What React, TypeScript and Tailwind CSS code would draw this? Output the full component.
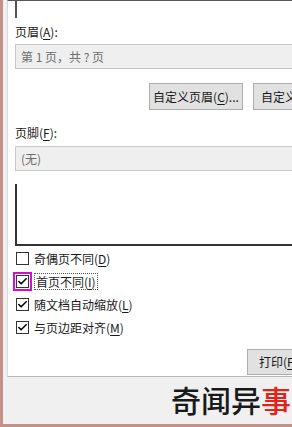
import { Check } from "lucide-react";

const font = { fontFamily: '"Noto Sans CJK SC", "Microsoft YaHei", sans-serif' };

function U({ c }: { c: string }) {
  return <span className="underline underline-offset-2">{c}</span>;
}

function Box({ checked }: { checked: boolean }) {
  return (
    <span className="flex h-[13px] w-[13px] items-center justify-center border border-[#333] bg-white">
      {checked && <Check className="h-[11px] w-[11px] text-black" strokeWidth={3.5} />}
    </span>
  );
}

const checks = [
  { label: "奇偶页不同", key: "D", checked: false },
  { label: "首页不同", key: "I", checked: true, focus: true },
  { label: "随文档自动缩放", key: "L", checked: true },
  { label: "与页边距对齐", key: "M", checked: true },
];

export default function App() {
  return (
    <div
      className="relative h-[427px] w-[292px] overflow-hidden border-b-[3px] border-l-[3px] border-[#c4908a] bg-[#f0f0f0] text-[12px] text-[#1a1a1a]"
      style={font}
    >
      <div className="ml-[4px] h-[377px] overflow-hidden border-l border-t border-b border-l-[#d8d8d8] border-t-[#555] border-b-[#b8b8b8] bg-white pl-[7px]">
        <div className="h-[17px] w-[2px] bg-[#555]" />

        <div className="mt-[6px] leading-[16px]">
          页眉(<U c="A" />):
        </div>
        <div className="mt-[4px] flex h-[25px] w-[290px] items-center border border-[#c8c8c8] bg-[#efefef] pl-[5px] text-[#6d6d6d]">
          第 1 页，共 ? 页
        </div>

        <div className="mt-[14px] flex gap-[10px] pl-[134px]">
          <div className="flex h-[27px] w-[94px] shrink-0 items-center justify-center whitespace-nowrap border border-[#adadad] bg-[#e1e1e1]">
            自定义页眉(<U c="C" />)...
          </div>
          <div className="flex h-[27px] w-[94px] shrink-0 items-center justify-start whitespace-nowrap border border-[#adadad] bg-[#e1e1e1] pl-[7px]">
            自定义页脚(<U c="U" />)...
          </div>
        </div>

        <div className="mt-[15px] leading-[16px]">
          页脚(<U c="F" />):
        </div>
        <div className="mt-[5px] flex h-[25px] w-[290px] items-center border border-[#c8c8c8] bg-[#efefef] pl-[5px] text-[#6d6d6d]">
          (无)
        </div>

        <div className="mt-[13px] h-[62px] w-[290px] border-b-2 border-l-2 border-[#333]" />

        <div className="mt-[6px] flex flex-col gap-[10px] pl-[1px]">
          {checks.map((c) => (
            <div key={c.key} className="flex h-[13px] items-center gap-[4px]">
              <span
                className={
                  c.focus
                    ? "-m-[3px] flex border-[2px] border-[#d20fd0] p-[1px]"
                    : "flex"
                }
              >
                <Box checked={c.checked} />
              </span>
              <span
                className={
                  c.focus
                    ? "ml-[1px] border border-dotted border-[#555] px-[1px] leading-[15px]"
                    : "ml-[1px] leading-[15px]"
                }
              >
                {c.label}(<U c={c.key} />)
              </span>
            </div>
          ))}
        </div>

        <div className="mt-[15px] flex pl-[232px]">
          <div className="flex h-[26px] w-[60px] shrink-0 items-center whitespace-nowrap border border-[#adadad] bg-[#e1e1e1] pl-[11px]">
            打印(<U c="P" />)
          </div>
        </div>
      </div>

      <div className="absolute left-[168px] top-[381px] whitespace-nowrap text-[30px] leading-[36px] font-medium text-[#1a1a1a]">
        奇闻异<span className="text-[#e0241b]">事</span>
      </div>
    </div>
  );
}
